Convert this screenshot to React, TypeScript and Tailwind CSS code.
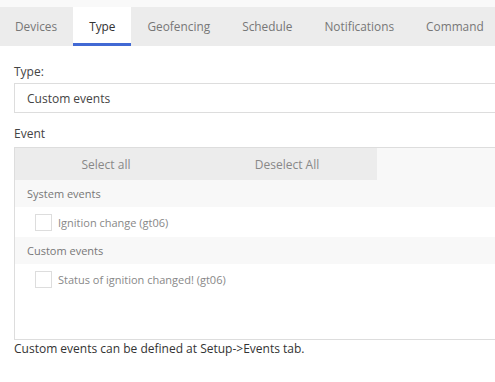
import React from "react";

const tabs = ["Devices", "Type", "Geofencing", "Schedule", "Notifications", "Command"];

function EventGroup({ title, items }: { title: string; items: string[] }) {
  return (
    <div className="text-[11px]">
      <div className="flex h-[27px] items-center bg-[#f8f8f8] pl-[12px] text-[#777]">{title}</div>
      {items.map((item) => (
        <div key={item} className="flex h-[30px] items-center bg-white pl-[20px]">
          <span className="h-[17px] w-[17px] shrink-0 border border-[#ddd] bg-white" />
          <span className="ml-[6px] text-[#888]">{item}</span>
        </div>
      ))}
    </div>
  );
}

export default function App() {
  return (
    <div className="h-[382px] w-[495px] overflow-hidden bg-white font-['Open_Sans',sans-serif] text-[12px] leading-[17px]">
      <div className="h-[7px] bg-[#f9f9f9]" />
      <div className="flex h-[39px] w-[540px] bg-[#ececec] text-[11.85px]">
        {tabs.map((t) =>
          t === "Type" ? (
            <div
              key={t}
              className="flex shrink-0 items-center whitespace-nowrap border-b-[3px] border-[#4169d4] bg-white px-[16px] pt-[3px] text-[#333]"
            >
              {t}
            </div>
          ) : (
            <div key={t} className="flex shrink-0 items-center whitespace-nowrap px-[16px] text-[#777] first:pl-[15px]">
              {t}
            </div>
          )
        )}
      </div>

      <div className="w-[540px] pl-[14px]">
        <div className="mt-[17px] text-[#444]">Type:</div>
        <div className="mt-[3px] flex h-[30px] items-center border border-[#ddd] bg-white pl-[12px] text-[#444]">
          Custom events
        </div>

        <div className="mt-[12px] text-[#444]">Event</div>
        <div className="mt-[5px] h-[193px] border border-[#ddd] bg-white">
          <div className="flex h-[32px] bg-[#f8f8f8]">
            <button type="button" className="w-[182px] bg-[#ececec] text-[#888]">
              Select all
            </button>
            <button type="button" className="w-[180px] bg-[#ececec] text-[#888]">
              Deselect All
            </button>
          </div>
          <EventGroup title="System events" items={["Ignition change (gt06)"]} />
          <EventGroup title="Custom events" items={["Status of ignition changed! (gt06)"]} />
        </div>
        <div className="text-[#333]">Custom events can be defined at Setup-&gt;Events tab.</div>
      </div>
    </div>
  );
}
